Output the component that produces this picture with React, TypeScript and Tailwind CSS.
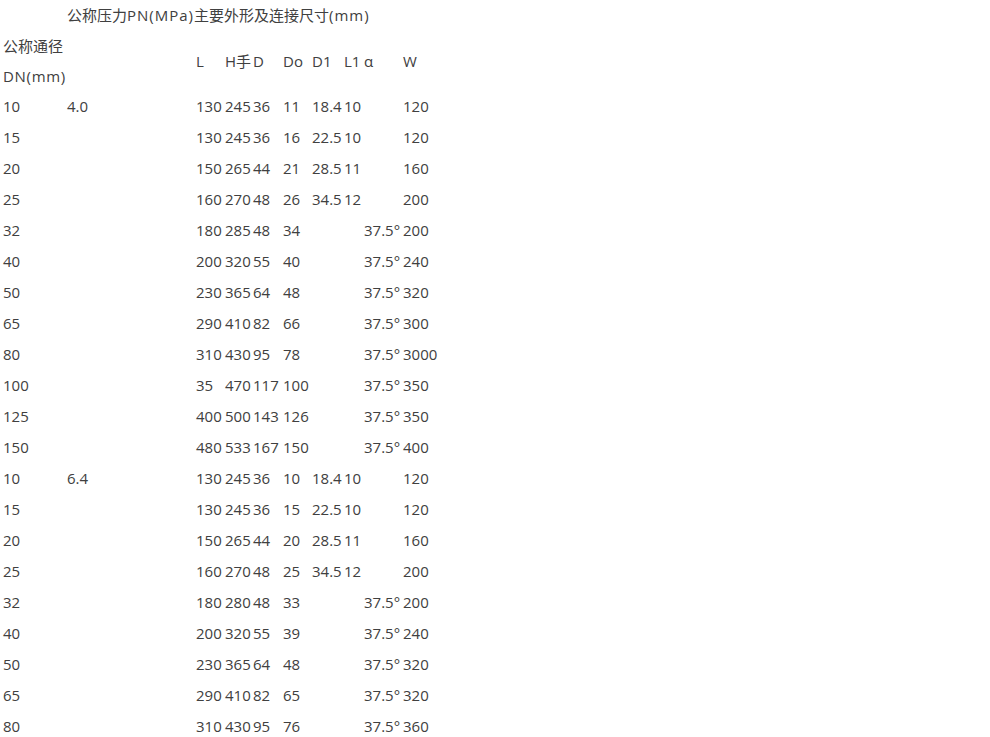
const cols =
  "grid grid-cols-[64px_129px_29px_28px_30px_29px_32px_20px_39px_80px] items-center whitespace-nowrap";

type Row = [string, string, string, string, string, string, string, string, string, string];

const rows: Row[] = [
  ["10", "4.0", "130", "245", "36", "11", "18.4", "10", "", "120"],
  ["15", "", "130", "245", "36", "16", "22.5", "10", "", "120"],
  ["20", "", "150", "265", "44", "21", "28.5", "11", "", "160"],
  ["25", "", "160", "270", "48", "26", "34.5", "12", "", "200"],
  ["32", "", "180", "285", "48", "34", "", "", "37.5°", "200"],
  ["40", "", "200", "320", "55", "40", "", "", "37.5°", "240"],
  ["50", "", "230", "365", "64", "48", "", "", "37.5°", "320"],
  ["65", "", "290", "410", "82", "66", "", "", "37.5°", "300"],
  ["80", "", "310", "430", "95", "78", "", "", "37.5°", "3000"],
  ["100", "", "35", "470", "117", "100", "", "", "37.5°", "350"],
  ["125", "", "400", "500", "143", "126", "", "", "37.5°", "350"],
  ["150", "", "480", "533", "167", "150", "", "", "37.5°", "400"],
  ["10", "6.4", "130", "245", "36", "10", "18.4", "10", "", "120"],
  ["15", "", "130", "245", "36", "15", "22.5", "10", "", "120"],
  ["20", "", "150", "265", "44", "20", "28.5", "11", "", "160"],
  ["25", "", "160", "270", "48", "25", "34.5", "12", "", "200"],
  ["32", "", "180", "280", "48", "33", "", "", "37.5°", "200"],
  ["40", "", "200", "320", "55", "39", "", "", "37.5°", "240"],
  ["50", "", "230", "365", "64", "48", "", "", "37.5°", "320"],
  ["65", "", "290", "410", "82", "65", "", "", "37.5°", "320"],
  ["80", "", "310", "430", "95", "76", "", "", "37.5°", "360"],
];

const headers = ["L", "H手", "D", "Do", "D1", "L1", "α", "W"];

export default function App() {
  return (
    <div className="min-h-screen bg-white pl-[3px] text-[15px] text-[#404040] font-['Open_Sans','Noto_Sans_CJK_SC',sans-serif]">
      <div className={`${cols} h-[31px]`}>
        <div />
        <div className="col-span-9">
          公称压力<span className="tracking-[1px]">PN(MPa)</span>主要外形及连接尺寸
          <span className="tracking-[1px]">(mm)</span>
        </div>
      </div>
      <div className={`${cols} h-[60px]`}>
        <div className="leading-[30px]">
          公称通径
          <br />
          <span className="tracking-[0.7px]">DN(mm)</span>
        </div>
        <div />
        {headers.map((h, i) => (
          <div key={i}>{h}</div>
        ))}
      </div>
      {rows.map((r, i) => (
        <div key={i} className={`${cols} h-[31px]`}>
          {r.map((c, j) => (
            <div key={j}>{c}</div>
          ))}
        </div>
      ))}
    </div>
  );
}
